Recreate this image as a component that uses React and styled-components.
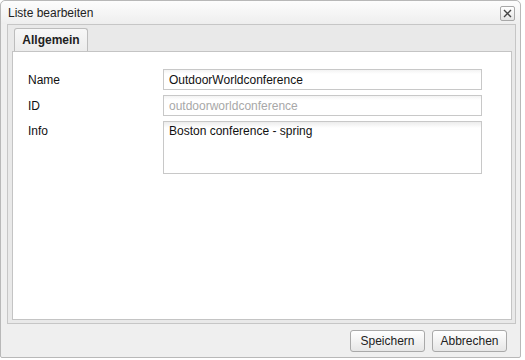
import React from 'react';
import styled, { createGlobalStyle } from 'styled-components';

const GlobalStyle = createGlobalStyle`
  html, body {
    margin: 0;
    padding: 0;
    background: #ffffff;
  }
  body {
    font-family: Tahoma, "Liberation Sans", "DejaVu Sans", sans-serif;
    font-size: 12px;
    color: #000;
  }
`;

const Window = styled.div`
  box-sizing: border-box;
  width: 521px;
  height: 358px;
  border: 1px solid #b8b8b8;
  border-radius: 5px 5px 2px 2px;
  background: #efefef;
  display: flex;
  flex-direction: column;
`;

const Header = styled.div`
  height: 23px;
  display: flex;
  align-items: center;
  justify-content: space-between;
  padding: 0 5px 0 7px;
  background: linear-gradient(#fdfdfd, #eeeeee);
  border-radius: 5px 5px 0 0;
`;

const Title = styled.span`
  font-size: 12px;
  color: #222;
`;

const CloseButton = styled.button`
  box-sizing: border-box;
  width: 15px;
  height: 15px;
  padding: 0;
  margin-top: 2px;
  border: 1px solid #a8a8a8;
  border-radius: 2px;
  background: linear-gradient(#ffffff, #e4e4e4);
  display: flex;
  align-items: center;
  justify-content: center;
`;

const Body = styled.div`
  box-sizing: border-box;
  margin: 0 4px 0 6px;
  border: 1px solid #c6c6c6;
  background: #e9e9e9;
  padding: 3px 3px 3px 4px;
  height: 300px;
  display: flex;
  flex-direction: column;
`;

const TabStrip = styled.div`
  display: flex;
  padding-left: 2px;
  height: 23px;
  border-bottom: 1px solid #c4c4c4;
`;

const Tab = styled.div`
  box-sizing: border-box;
  width: 74px;
  height: 23px;
  border: 1px solid #bdbdbd;
  border-bottom: none;
  border-radius: 3px 3px 0 0;
  background: ${(p) => (p.active ? 'linear-gradient(#f7f7f7, #ececec)' : '#e0e0e0')};
  font-weight: bold;
  font-size: 12px;
  display: flex;
  align-items: center;
  justify-content: center;
  color: #222;
  margin-bottom: -1px;
`;

const TabContent = styled.div`
  flex: 1;
  background: #ffffff;
  border: 1px solid #c4c4c4;
  border-top: none;
  padding: 17px 29px 0 15px;
  display: grid;
  grid-template-columns: 135px 1fr;
  grid-auto-rows: min-content;
  row-gap: 5px;
`;

const Label = styled.label`
  font-size: 12px;
  color: #111;
  padding-top: ${(p) => (p.top ? '3px' : '0')};
  align-self: ${(p) => (p.top ? 'start' : 'center')};
`;

const Input = styled.div`
  box-sizing: border-box;
  height: ${(p) => (p.tall ? '53px' : '21px')};
  border: 1px solid #c8c8c8;
  background: ${(p) => (p.tall ? 'linear-gradient(#ececec, #ffffff 6px)' : 'linear-gradient(#f3f3f3, #ffffff 4px)')};
  padding: ${(p) => (p.tall ? '2px 5px' : '0 5px')};
  display: flex;
  align-items: ${(p) => (p.tall ? 'flex-start' : 'center')};
  font-size: 12px;
  color: ${(p) => (p.disabled ? '#a8a8a8' : '#111')};
`;

const Footer = styled.div`
  flex: 1;
  display: flex;
  justify-content: flex-end;
  align-items: center;
  gap: 7px;
  padding: 0 13px 0 0;
`;

const Button = styled.button`
  box-sizing: border-box;
  width: 75px;
  height: 22px;
  border: 1px solid #a9a9a9;
  border-radius: 3px;
  background: linear-gradient(#ffffff, #e6e6e6);
  font-family: inherit;
  font-size: 12px;
  color: #222;
  padding: 0;
`;

const App = () => {
  return (
    <>
      <GlobalStyle />
      <Window>
        <Header>
          <Title>Liste bearbeiten</Title>
          <CloseButton type="button" aria-label="Schließen">
            <svg width="9" height="9" viewBox="0 0 9 9">
              <path d="M1 1L8 8M8 1L1 8" stroke="#444" strokeWidth="1.4" />
            </svg>
          </CloseButton>
        </Header>
        <Body>
          <TabStrip>
            <Tab active>Allgemein</Tab>
          </TabStrip>
          <TabContent>
            <Label>Name</Label>
            <Input>OutdoorWorldconference</Input>
            <Label>ID</Label>
            <Input disabled>outdoorworldconference</Input>
            <Label top>Info</Label>
            <Input tall>Boston conference - spring</Input>
          </TabContent>
        </Body>
        <Footer>
          <Button type="button">Speichern</Button>
          <Button type="button">Abbrechen</Button>
        </Footer>
      </Window>
    </>
  );
};

export default App;
